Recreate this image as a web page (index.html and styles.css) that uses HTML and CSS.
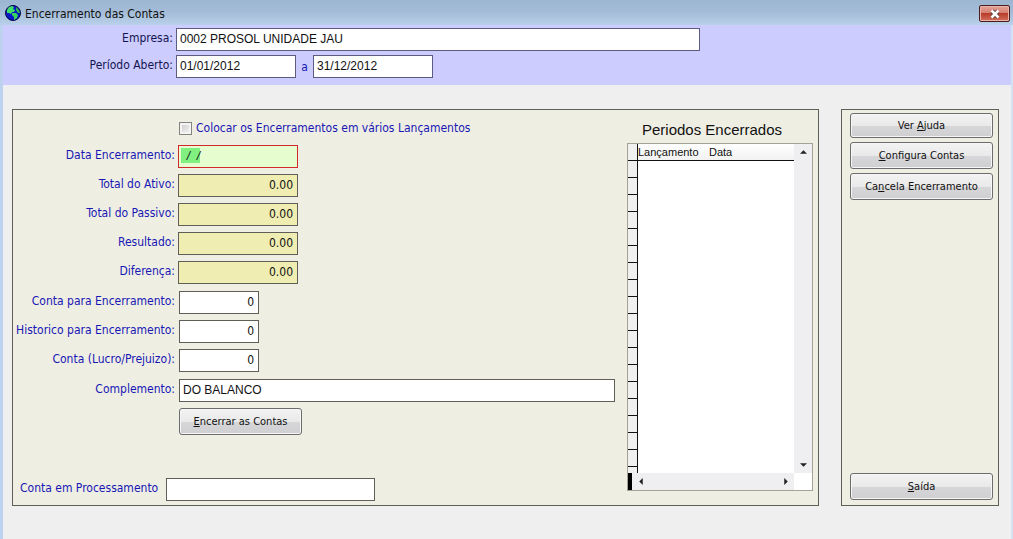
FILE: index.html
```html
<!DOCTYPE html>
<html lang="pt-BR">
<head>
<meta charset="utf-8">
<title>Encerramento das Contas</title>
<link rel="stylesheet" href="styles.css">
</head>
<body>
<div class="window">
  <header class="titlebar">
    <svg class="globe" viewBox="0 0 16 16" aria-hidden="true">
      <circle cx="8" cy="8" r="7.5" fill="#0a18c8" stroke="#04043c"/>
      <path d="M2 5 4 2 7 1 9 2 8 4 10 5 9 7 7 7 6 9 4 8 2 8Z" fill="#3fe06a"/>
      <path d="M7 8 11 8 13 10 12 13 9 15 9 12 7 10Z" fill="#35d45c"/>
      <path d="M11 2 14 5 15 8 13 8 11 5Z" fill="#2cb84e"/>
    </svg>
    <h1 class="title">Encerramento das Contas</h1>
    <button class="close" type="button" aria-label="Fechar">
      <svg viewBox="0 0 12 10" aria-hidden="true"><path d="M3 2 9 8M9 2 3 8" stroke="#5a3a3a" stroke-width="4.4"/><path d="M2.5 1.5 9.5 8.5M9.5 1.5 2.5 8.5" stroke="#fff" stroke-width="2.6"/></svg>
    </button>
  </header>

  <section class="company">
    <div class="row">
      <label class="label" for="empresa">Empresa:</label>
      <input class="field company-name" id="empresa" value="0002 PROSOL UNIDADE JAU">
    </div>
    <div class="row">
      <label class="label" for="inicio">Período Aberto:</label>
      <input class="field date" id="inicio" value="01/01/2012">
      <label class="until" for="fim">a</label>
      <input class="field date" id="fim" value="31/12/2012">
    </div>
  </section>

  <main class="content">
    <section class="panel main-panel">
      <form class="form">
        <div class="check-row">
          <input class="check" type="checkbox" id="varios">
          <label for="varios">Colocar os Encerramentos em vários Lançamentos</label>
        </div>
        <div class="group">
          <div class="row"><label class="label" for="data">Data Encerramento:</label><input class="field amount active" id="data" value="  /  /"></div>
          <div class="row"><label class="label" for="ativo">Total do Ativo:</label><input class="field amount total" id="ativo" value="0.00" readonly></div>
          <div class="row"><label class="label" for="passivo">Total do Passivo:</label><input class="field amount total" id="passivo" value="0.00" readonly></div>
          <div class="row"><label class="label" for="resultado">Resultado:</label><input class="field amount total" id="resultado" value="0.00" readonly></div>
          <div class="row"><label class="label" for="diferenca">Diferença:</label><input class="field amount total" id="diferenca" value="0.00" readonly></div>
        </div>
        <div class="group">
          <div class="row"><label class="label" for="conta">Conta para Encerramento:</label><input class="field code" id="conta" value="0"></div>
          <div class="row"><label class="label" for="historico">Historico para Encerramento:</label><input class="field code" id="historico" value="0"></div>
          <div class="row"><label class="label" for="lucro">Conta (Lucro/Prejuizo):</label><input class="field code" id="lucro" value="0"></div>
        </div>
        <div class="group">
          <div class="row"><label class="label" for="complemento">Complemento:</label><input class="field wide" id="complemento" value="DO BALANCO"></div>
          <div class="row submit-row"><button class="button submit" type="button"><u>E</u>ncerrar as Contas</button></div>
        </div>
        <div class="row processing">
          <label for="processamento">Conta em Processamento</label>
          <input class="field process" id="processamento">
        </div>
      </form>

      <section class="periods">
        <h2 class="periods-title">Periodos Encerrados</h2>
        <div class="grid">
          <div class="grid-body">
            <table class="table">
              <thead><tr><td class="gutter"></td><th class="col-entry">Lançamento</th><th>Data</th></tr></thead>
            </table>
          </div>
          <div class="scroll vertical">
            <svg viewBox="0 0 8 4" aria-hidden="true"><path d="M0 4 4 0 8 4Z"/></svg>
            <svg viewBox="0 0 8 4" aria-hidden="true"><path d="M0 0H8L4 4Z"/></svg>
          </div>
          <div class="scroll horizontal">
            <svg viewBox="0 0 4 8" aria-hidden="true"><path d="M4 0V8L0 4Z"/></svg>
            <svg viewBox="0 0 4 8" aria-hidden="true"><path d="M0 0 4 4 0 8Z"/></svg>
          </div>
        </div>
      </section>
    </section>

    <nav class="panel side">
      <button class="button help" type="button">Ver&nbsp;<u>A</u>juda</button>
      <button class="button" type="button"><u>C</u>onfigura Contas</button>
      <button class="button" type="button">Ca<u>n</u>cela Encerramento</button>
      <button class="button exit" type="button"><u>S</u>aída</button>
    </nav>
  </main>
</div>
</body>
</html>
```
FILE: styles.css
```css
* {
  box-sizing: border-box;
}

body {
  margin: 0;
  font: 12px/16px "DejaVu Sans Condensed", "Noto Sans", sans-serif;
  color: #111;
}

.window {
  display: flex;
  flex-direction: column;
  min-height: 100vh;
  background: #efefef;
  border-left: 3px solid #bdd2ee;
  border-right: 2px solid #d3e3f4;
}

.titlebar {
  display: flex;
  align-items: center;
  gap: 4px;
  height: 25px;
  margin: 0 -2px 0 -3px;
  padding: 0 3px 0 5px;
  background: linear-gradient(#9cb5d1, #a5bdd8 50%, #b9d0ea);
}

.globe {
  width: 16px;
  height: 16px;
}

.title {
  flex: 1;
  margin: 0;
  padding-top: 2px;
  font-size: 12px;
  font-weight: normal;
}

.close {
  display: flex;
  align-items: center;
  justify-content: center;
  width: 31px;
  height: 17px;
  margin-top: 2px;
  padding: 0;
  border: 1px solid #4a1c20;
  border-radius: 2px;
  background: linear-gradient(#e5a599, #d47d6f 48%, #b93c2b 50%, #d2705c);
  box-shadow: inset 0 0 0 1px #e9b4aa;
}

.close svg {
  width: 12px;
  height: 10px;
}

.company {
  display: flex;
  flex-direction: column;
  gap: 4px;
  height: 60px;
  padding: 3px 0 0;
  background: #ccccfe;
}

.company .label {
  width: 170px;
  color: #141450;
}

.company .field {
  border-color: #5c5c80;
}

.row {
  display: flex;
  gap: 3px;
}

.label {
  flex: none;
  width: 162px;
  padding-top: 2px;
  text-align: right;
  white-space: nowrap;
}

.field {
  min-width: 0;
  height: 23px;
  padding: 0 4px 2px 3px;
  border: 1px solid #5f5f57;
  background: #fff;
  font: 12px "Liberation Sans", sans-serif;
  color: #111;
}

.company-name {
  flex: 0 1 524px;
}

.date,
.amount {
  width: 120px;
}

.until {
  width: 11px;
  padding-top: 4px;
  text-align: center;
  color: #1818b4;
}

.content {
  display: flex;
  flex: 1;
  gap: 22px;
  padding: 24px 12px 33px 9px;
}

.panel {
  border: 1px solid #5f5f57;
  background: #efeee3;
}

.main-panel {
  display: flex;
  flex: 1;
  gap: 12px;
  padding: 0 5px 0 0;
}

.form {
  display: flex;
  flex: 1;
  flex-direction: column;
  gap: 7px;
  padding: 10px 0 4px;
  color: #1818b4;
}

.check-row {
  display: flex;
  align-items: center;
  gap: 4px;
  padding-left: 166px;
}

.check {
  appearance: none;
  width: 13px;
  height: 13px;
  margin: 0;
  border: 1px solid #85857f;
  background: linear-gradient(135deg, #c9c9c9, #f8f8f8);
  box-shadow: inset 0 0 0 2px #f4f4f4;
}

.group {
  display: flex;
  flex-direction: column;
  gap: 6px;
}

.group + .group .row {
  gap: 4px;
}

.check-row + .group {
  margin-top: 2px;
}

.active {
  padding-left: 1px;
  border-color: #d02a2a;
  background: linear-gradient(#80f080, #80f080) 2px 2px / 19px 15px no-repeat #e6fdd0;
  font-style: italic;
}

.total {
  background: #efedb2;
}

.total,
.code {
  font-family: "DejaVu Sans Condensed", "Noto Sans", sans-serif;
  text-align: right;
}

.code {
  width: 80px;
}

.wide {
  flex: 1;
}

.submit-row {
  padding-left: 166px;
}

.button {
  height: 27px;
  padding: 0 0 1px;
  border: 1px solid #6c6c6c;
  border-radius: 3px;
  background: linear-gradient(#f3f3f3, #e9e9e9 50%, #d7d7d9 51%, #cfcfd2);
  box-shadow: inset 0 0 0 1px #f6f6f6;
  font: 11px "DejaVu Sans Condensed", "Noto Sans", sans-serif;
  color: #111;
}

.submit {
  width: 123px;
}

.processing {
  gap: 8px;
  margin-top: auto;
  padding-left: 7px;
}

.processing label {
  padding-top: 2px;
}

.process {
  width: 209px;
}

.periods {
  display: flex;
  flex-direction: column;
  width: 186px;
  padding: 11px 0 14px;
}

.periods-title {
  margin: 0 0 4px;
  padding-right: 16px;
  font: 15px/18px "Liberation Sans", sans-serif;
  text-align: center;
}

.grid {
  display: grid;
  flex: 1;
  grid-template: 1fr 17px / 1fr 18px;
  border: 1px solid #a3a396;
  background: #fff;
}

.grid-body {
  background:
    linear-gradient(#111, #111) 9px 0 / 1px 100% no-repeat,
    repeating-linear-gradient(#f0f0f0 0 16px, #111 16px 17px) 0 0 / 9px 100% no-repeat;
}

.table {
  width: 100%;
  height: 17px;
  border-collapse: collapse;
  font: 11px/16px "Liberation Sans", sans-serif;
}

.table th,
.gutter {
  padding: 0;
  font-weight: normal;
  text-align: left;
}

.table th {
  border-bottom: 1px solid #111;
  background: linear-gradient(#fff, #f2f2f2);
}

.gutter {
  width: 10px;
}

.col-entry {
  width: 71px;
}

.scroll {
  display: flex;
  align-items: center;
  justify-content: space-between;
  background: #efeff1;
}

.scroll svg {
  fill: #222;
}

.vertical {
  flex-direction: column;
  padding: 6px 0;
}

.vertical svg {
  width: 7px;
  height: 4px;
}

.horizontal {
  padding: 0 6px 0 7px;
  border-left: 4px solid #000;
}

.horizontal svg {
  width: 4px;
  height: 7px;
}

.side {
  display: flex;
  flex-direction: column;
  gap: 4px;
  width: 158px;
  padding: 3px 5px 5px 8px;
}

.help {
  height: 25px;
}

.exit {
  margin-top: auto;
}
```
